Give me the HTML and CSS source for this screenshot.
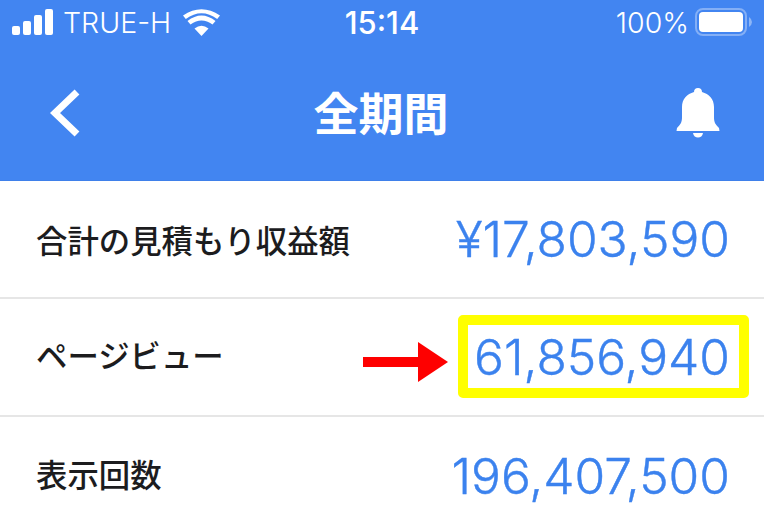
FILE: index.html
```html
<!DOCTYPE html>
<html lang="ja">
<head>
<meta charset="utf-8">
<title>全期間</title>
<link rel="stylesheet" href="styles.css">
</head>
<body>
<header class="top">
  <div class="status">
    <div class="status-left">
      <svg class="signal" width="42" height="26" viewBox="0 0 42 26"><rect x="0" y="17" width="8" height="9" rx="2"/><rect x="11" y="12" width="8" height="14" rx="2"/><rect x="22" y="6" width="8" height="20" rx="2"/><rect x="33" y="0" width="8" height="26" rx="2"/></svg>
      <span class="carrier">TRUE-H</span>
      <svg class="wifi" width="37" height="27" viewBox="0 0 37 27"><path d="M18.500 27 L11.500 19.500 Q18.500 14 25.500 19.500 Z"/><path d="M7.500 15.500 L4.500 12 Q18.500 1 32.500 12 L29.500 15.500 Q18.500 7.500 7.500 15.500 Z" /><path d="M2.800 10 L0 6.500 Q18.500 -6 37 6.500 L34.200 10 Q18.500 -1.500 2.800 10 Z"/></svg>
    </div>
    <div class="clock">15:14</div>
    <div class="status-right">
      <span class="percent">100%</span>
      <svg class="battery" width="58" height="28" viewBox="0 0 58 28"><rect class="batt-shell" x="1" y="1" width="50" height="26" rx="7"/><rect class="batt-fill" x="4" y="4" width="44" height="20" rx="4"/><path class="batt-tip" d="M54 9 Q57 11 57 14 Q57 17 54 19 Z"/></svg>
    </div>
  </div>
  <nav class="nav">
    <svg class="back" width="30" height="48" viewBox="0 0 30 48"><path d="M27 3 L5 24 L27 45" /></svg>
    <h1 class="title">全期間</h1>
    <svg class="bell" width="44" height="50" viewBox="0 0 44 50"><path d="M22 0 C24.500 0 26 1.500 26 4 C33 6 38 11 38 19 L38 29 C38 34 39 36 43 40 L43.500 43 L0.500 43 L1 40 C5 36 6 34 6 29 L6 19 C6 11 11 6 18 4 C18 1.500 19.500 0 22 0 Z"/><path d="M17 45 L27 45 C26.500 48 24.500 49.500 22 49.500 C19.500 49.500 17.500 48 17 45 Z"/></svg>
  </nav>
</header>
<main class="list">
  <div class="row">
    <span class="label">合計の見積もり収益額</span>
    <span class="value">¥17,803,590</span>
  </div>
  <div class="row">
    <span class="label label-up">ページビュー</span>
    <span class="value">61,856,940</span>
    <svg class="arrow" width="86" height="40" viewBox="0 0 86 40"><path d="M0 15 H55 V0 L85 20 L55 40 V25 H0 Z"/></svg>
    <div class="highlight"></div>
  </div>
  <div class="row">
    <span class="label label-up">表示回数</span>
    <span class="value">196,407,500</span>
  </div>
</main>
</body>
</html>
```
FILE: styles.css
```css
* { box-sizing: border-box; }
html, body { margin: 0; padding: 0; }
body {
  width: 764px;
  height: 532px;
  overflow: hidden;
  background: #fff;
  font-family: "Inter", "Noto Sans CJK JP", sans-serif;
}
.top {
  height: 181px;
  background: #4285f1;
  color: #fff;
  border-bottom: 1px solid #3f80ea;
}
.status {
  height: 44px;
  padding: 0 11px 0 12px;
  display: grid;
  grid-template-columns: 1fr auto 1fr;
  align-items: center;
}
.status-left { display: flex; align-items: center; }
.status-right { display: flex; align-items: center; justify-content: flex-end; gap: 6px; }
.signal, .wifi, .bell { fill: #fff; }
.carrier { margin-left: 9px; font-size: 28.500px; font-weight: 300; }
.wifi { margin-left: 12px; }
.clock { font-size: 31px; font-weight: 500; line-height: 1; margin-left: -1px; }
.percent { font-size: 28.500px; font-weight: 300; }
.batt-shell { fill: none; stroke: #fff; stroke-opacity: 0.35; stroke-width: 2; }
.batt-fill { fill: #fff; }
.batt-tip { fill: #fff; fill-opacity: 0.4; }
.nav {
  height: 136px;
  padding: 2px 44px 0 50px;
  display: flex;
  align-items: center;
  justify-content: space-between;
}
.back { fill: none; stroke: #fff; stroke-width: 7; }
.title { margin: 2px 0 0 6px; font-size: 45px; font-weight: 700; line-height: 1; }
.list { display: flex; flex-direction: column; }
.row {
  position: relative;
  height: 118px;
  padding: 0 34px 0 36px;
  display: flex;
  align-items: center;
  justify-content: space-between;
  border-bottom: 2px solid #e6e6e6;
}
.row:last-child { border-bottom: 0; }
.label { font-size: 31.400px; font-weight: 500; color: #1c1c1e; }
.label-up { margin-bottom: 5px; }
.value { font-size: 49.700px; font-weight: 300; color: #3b82ee; -webkit-text-stroke: 0.4px #3b82ee; }
.arrow { position: absolute; left: 363px; top: 43px; fill: #fe0000; }
.highlight {
  position: absolute;
  left: 458px;
  top: 16px;
  width: 291px;
  height: 83px;
  border: 10px solid #ffff00;
  border-radius: 5px;
}
```
